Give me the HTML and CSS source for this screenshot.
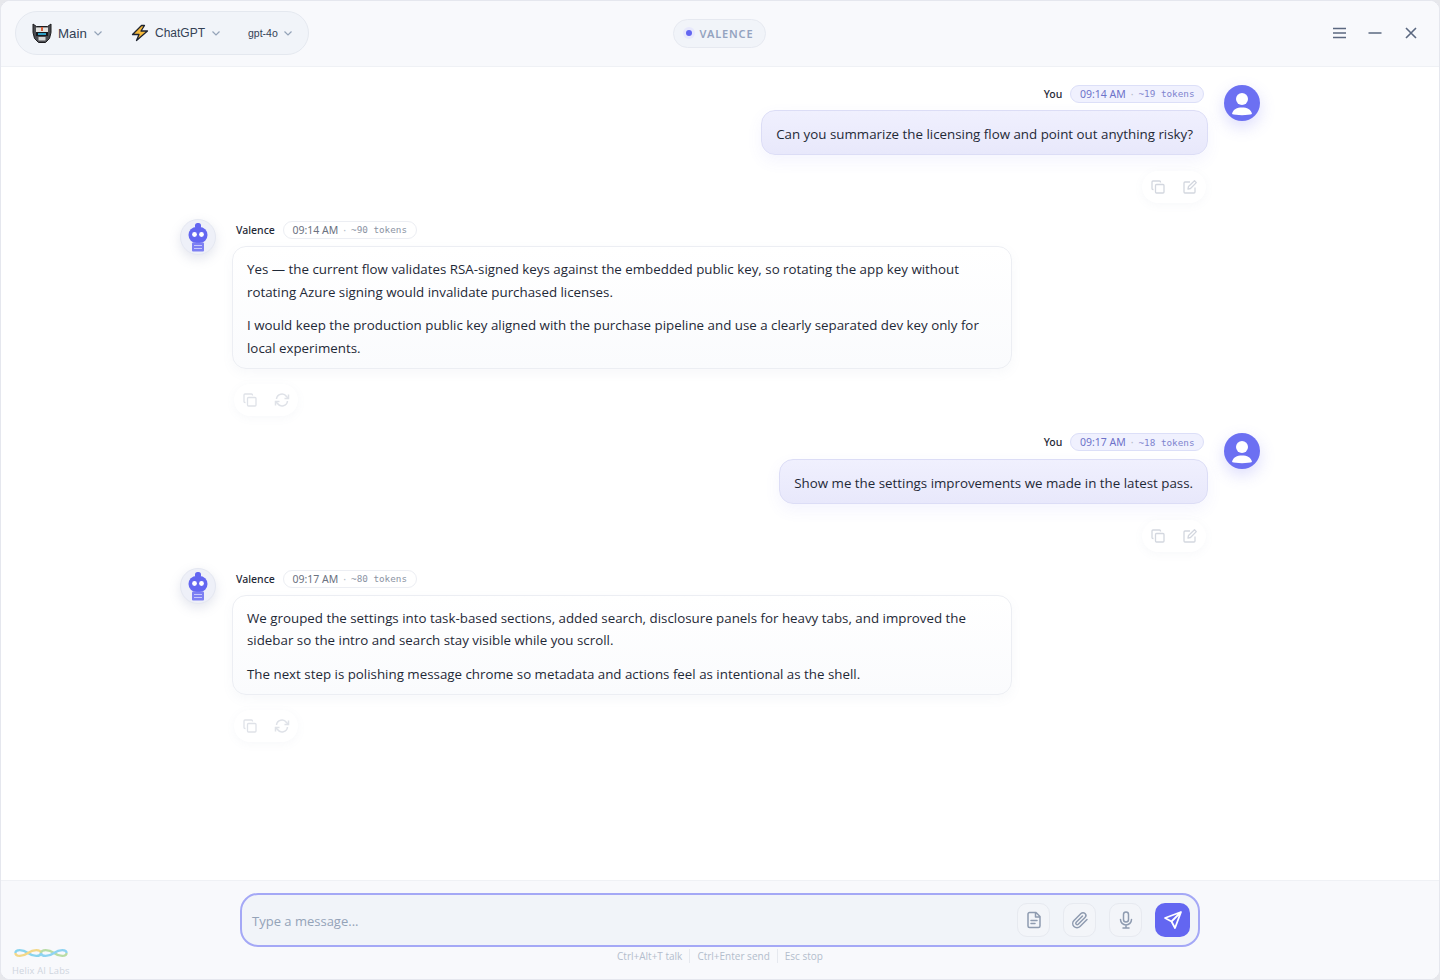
FILE: index.html
```html
<!DOCTYPE html>
<html lang="en">
<head>
    <meta charset="UTF-8">
    <title>Valence</title>
    <link rel="stylesheet" href="styles.css">
</head>
<body>
    <div class="window">
        <header class="topbar">
            <div class="selectors">
                <div class="selector sel-main">
                    <svg class="persona" width="20" height="20" viewBox="0 0 20 20">
                        <path d="M1 1L4.500 3.500H15.500L19 1V9.500L17.500 15.500L13.500 19.500H6.500L2.500 15.500L1 9.500Z" fill="#4a4b50" stroke="#1c1c1f" stroke-width="1"/>
                        <path d="M4 4.500H16V10H4Z" fill="#e4e3e0"/>
                        <path d="M9 4H11V8H9Z" fill="#d9603c"/>
                        <path d="M4 9H16V13H4Z" fill="#17191d"/>
                        <path d="M6 10H14V12H6Z" fill="#2f9fc4"/>
                        <path d="M6.500 14H13.500V17.500H6.500Z" fill="#d5d5d5"/>
                    </svg>
                    <span>Main</span>
                    <svg class="chev" width="10" height="10" viewBox="0 0 10 10"><path d="M1.500 3.500L5 7L8.500 3.500"/></svg>
                </div>
                <div class="selector sel-provider">
                    <svg width="18" height="18" viewBox="0 0 18 18">
                        <path d="M10.500 1.500L1.500 10.500H8L5.500 16.500L16.500 7H10L13.500 1.500Z" fill="#f6b93b" stroke="#1f2430" stroke-width="1.300" stroke-linejoin="round"/>
                    </svg>
                    <span>ChatGPT</span>
                    <svg class="chev" width="10" height="10" viewBox="0 0 10 10"><path d="M1.500 3.500L5 7L8.500 3.500"/></svg>
                </div>
                <div class="selector sel-model">
                    <span>gpt-4o</span>
                    <svg class="chev" width="10" height="10" viewBox="0 0 10 10"><path d="M1.500 3.500L5 7L8.500 3.500"/></svg>
                </div>
            </div>
            <div class="brand-pill"><i class="brand-dot"></i>VALENCE</div>
            <div class="win-controls">
                <svg width="16" height="16" viewBox="0 0 16 16"><path d="M2 3.500H15M2 8H15M2 12.500H15"/></svg>
                <svg width="16" height="16" viewBox="0 0 16 16"><path d="M1.500 8H14.500"/></svg>
                <svg width="16" height="16" viewBox="0 0 16 16"><path d="M3 3L13 13M13 3L3 13"/></svg>
            </div>
        </header>

        <main class="chat">
            <div class="msg msg-user">
                <div class="msg-body">
                    <div class="meta">
                        <span class="who">You</span>
                        <span class="stamp"><span>09:14 AM</span><i>·</i><code>~19 tokens</code></span>
                    </div>
                    <div class="bubble"><p>Can you summarize the licensing flow and point out anything risky?</p></div>
                    <div class="actions">
                        <svg width="16" height="16" viewBox="0 0 16 16"><use href="#i-copy"/></svg>
                        <svg width="16" height="16" viewBox="0 0 16 16"><use href="#i-edit"/></svg>
                    </div>
                </div>
                <div class="avatar avatar-user"><svg width="36" height="36" viewBox="0 0 36 36"><use href="#i-user"/></svg></div>
            </div>

            <div class="msg msg-bot">
                <div class="avatar avatar-bot"><svg width="36" height="36" viewBox="0 0 36 36"><use href="#i-bot"/></svg></div>
                <div class="msg-body">
                    <div class="meta">
                        <span class="who">Valence</span>
                        <span class="stamp"><span>09:14 AM</span><i>·</i><code>~90 tokens</code></span>
                    </div>
                    <div class="bubble">
                        <p>Yes — the current flow validates RSA-signed keys against the embedded public key, so rotating the app key without rotating Azure signing would invalidate purchased licenses.</p>
                        <p>I would keep the production public key aligned with the purchase pipeline and use a clearly separated dev key only for local experiments.</p>
                    </div>
                    <div class="actions">
                        <svg width="16" height="16" viewBox="0 0 16 16"><use href="#i-copy"/></svg>
                        <svg width="16" height="16" viewBox="0 0 16 16"><use href="#i-retry"/></svg>
                    </div>
                </div>
            </div>

            <div class="msg msg-user">
                <div class="msg-body">
                    <div class="meta">
                        <span class="who">You</span>
                        <span class="stamp"><span>09:17 AM</span><i>·</i><code>~18 tokens</code></span>
                    </div>
                    <div class="bubble"><p>Show me the settings improvements we made in the latest pass.</p></div>
                    <div class="actions">
                        <svg width="16" height="16" viewBox="0 0 16 16"><use href="#i-copy"/></svg>
                        <svg width="16" height="16" viewBox="0 0 16 16"><use href="#i-edit"/></svg>
                    </div>
                </div>
                <div class="avatar avatar-user"><svg width="36" height="36" viewBox="0 0 36 36"><use href="#i-user"/></svg></div>
            </div>

            <div class="msg msg-bot">
                <div class="avatar avatar-bot"><svg width="36" height="36" viewBox="0 0 36 36"><use href="#i-bot"/></svg></div>
                <div class="msg-body">
                    <div class="meta">
                        <span class="who">Valence</span>
                        <span class="stamp"><span>09:17 AM</span><i>·</i><code>~80 tokens</code></span>
                    </div>
                    <div class="bubble">
                        <p>We grouped the settings into task-based sections, added search, disclosure panels for heavy tabs, and improved the sidebar so the intro and search stay visible while you scroll.</p>
                        <p>The next step is polishing message chrome so metadata and actions feel as intentional as the shell.</p>
                    </div>
                    <div class="actions">
                        <svg width="16" height="16" viewBox="0 0 16 16"><use href="#i-copy"/></svg>
                        <svg width="16" height="16" viewBox="0 0 16 16"><use href="#i-retry"/></svg>
                    </div>
                </div>
            </div>
        </main>

        <footer class="composer">
            <div class="input-box">
                <span class="placeholder">Type a message...</span>
                <button class="tool"><svg width="20" height="20" viewBox="0 0 20 20"><path d="M5.500 2.500H12L16 6.500V16A1.500 1.500 0 0 1 14.500 17.500H5.500A1.500 1.500 0 0 1 4 16V4A1.500 1.500 0 0 1 5.500 2.500ZM11.500 2.500V7H16M7 10.500H13M7 13.500H11"/></svg></button>
                <button class="tool"><svg width="20" height="20" viewBox="0 0 20 20"><path d="M17 9.500L10 16.500A4.200 4.200 0 0 1 4 10.500L11 3.500A2.800 2.800 0 0 1 15 7.500L8.200 14.300A1.400 1.400 0 0 1 6.200 12.300L12.500 6"/></svg></button>
                <button class="tool"><svg width="20" height="20" viewBox="0 0 20 20"><path d="M10 2A2.500 2.500 0 0 1 12.500 4.500V9.500A2.500 2.500 0 0 1 7.500 9.500V4.500A2.500 2.500 0 0 1 10 2ZM4.500 9.500A5.500 5.500 0 0 0 15.500 9.500M10 15V18M7 18H13"/></svg></button>
                <button class="send"><svg width="20" height="20" viewBox="0 0 20 20"><path d="M18 2L2 8L8.500 11.500L12 18ZM18 2L8.500 11.500"/></svg></button>
            </div>
            <div class="hints">
                <span>Ctrl+Alt+T talk</span><span>Ctrl+Enter send</span><span>Esc stop</span>
            </div>
            <div class="lab">
                <svg width="54" height="14" viewBox="0 0 56 14">
                    <path d="M1.500 7C1.500 3 9 3 14.500 7S27.500 11 28 7" stroke="#8ad4ee"/>
                    <path d="M1.500 7C1.500 11 9 11 14.500 7S27.500 3 28 7" stroke="#f3d889"/>
                    <path d="M28 7C28.500 3 36 3 41.500 7S54.500 11 54.500 7" stroke="#b9dca6"/>
                    <path d="M28 7C28.500 11 36 11 41.500 7S54.500 3 54.500 7" stroke="#8fd3f2"/>
                </svg>
                <span>Helix AI Labs</span>
            </div>
        </footer>
    </div>

    <svg class="sprites" width="0" height="0">
        <symbol id="i-copy" viewBox="0 0 16 16">
            <path d="M6.500 5.500H13A1 1 0 0 1 14 6.500V13A1 1 0 0 1 13 14H6.500A1 1 0 0 1 5.500 13V6.500A1 1 0 0 1 6.500 5.500Z" fill="none" stroke="currentColor" stroke-width="1.300"/>
            <path d="M3.500 10.500H3A1 1 0 0 1 2 9.500V3A1 1 0 0 1 3 2H9.500A1 1 0 0 1 10.500 3V3.500" fill="none" stroke="currentColor" stroke-width="1.300"/>
        </symbol>
        <symbol id="i-edit" viewBox="0 0 16 16">
            <path d="M8 3H3A1 1 0 0 0 2 4V13A1 1 0 0 0 3 14H12A1 1 0 0 0 13 13V8.500" fill="none" stroke="currentColor" stroke-width="1.300"/>
            <path d="M12.500 1.800L14.300 3.600L8.500 9.500L6 10L6.500 7.500Z" fill="none" stroke="currentColor" stroke-width="1.300" stroke-linejoin="round"/>
        </symbol>
        <symbol id="i-retry" viewBox="0 0 16 16">
            <path d="M2.500 7A5.500 5.500 0 0 1 12.500 4.500L14 6M13.500 9A5.500 5.500 0 0 1 3.500 11.500L2 10" fill="none" stroke="currentColor" stroke-width="1.500"/>
            <path d="M14.500 2.500V6.500H10.500M1.500 13.500V9.500H5.500" fill="none" stroke="currentColor" stroke-width="1.500"/>
        </symbol>
        <symbol id="i-user" viewBox="0 0 36 36">
            <circle cx="18" cy="14" r="6" fill="#fff"/>
            <path d="M8 29C9 24 13 22.500 18 22.500S27 24 28 29C25 30.500 11 30.500 8 29Z" fill="#fff"/>
        </symbol>
        <symbol id="i-bot" viewBox="0 0 36 36">
            <rect x="15" y="4" width="6" height="6" rx="2.500" fill="#6366f1"/>
            <rect x="8.500" y="8" width="19" height="16" rx="8" fill="#6366f1"/>
            <circle cx="14.500" cy="15.500" r="2.400" fill="#fff"/>
            <circle cx="21.500" cy="15.500" r="2.400" fill="#fff"/>
            <rect x="12" y="23.500" width="12" height="9" rx="1" fill="#7c7ff3"/>
            <path d="M14 26.500H22M14 29.500H22" stroke="#c7c8fb" stroke-width="1"/>
        </symbol>
    </svg>
</body>
</html>
```

FILE: styles.css
```css
* {
    box-sizing: border-box;
}
html, body {
    margin: 0;
    height: 100%;
}
body {
    background: #e7e8ec;
    font-family: "Open Sans", "Noto Sans", sans-serif;
    color: #1f2937;
}
.sprites {
    position: absolute;
}
.window {
    height: 980px;
    display: flex;
    flex-direction: column;
    background: #fff;
    border: 1px solid #e5e7ee;
    border-radius: 10px;
    overflow: hidden;
}

/* top bar */
.topbar {
    height: 66px;
    flex: none;
    display: grid;
    grid-template-columns: 1fr auto 1fr;
    align-items: center;
    padding: 0 20px 1px 14px;
    background: #f8f9fc;
    border-bottom: 1px solid #eff1f5;
}
.selectors {
    justify-self: start;
    display: flex;
    align-items: center;
    width: 294px;
    height: 44px;
    padding: 0 16px;
    background: #f1f4f9;
    border: 1px solid #e4e8ef;
    border-radius: 22px;
}
.selector {
    display: flex;
    align-items: center;
    flex: none;
    font-family: "Liberation Sans", Arial, sans-serif;
    color: #334155;
    white-space: nowrap;
}
.sel-main {
    width: 99px;
    gap: 6px;
    font-size: 13.300px;
}
.sel-provider {
    width: 117px;
    gap: 6px;
    font-size: 12px;
}
.sel-model {
    gap: 5px;
    font-size: 10.500px;
}
.chev {
    fill: none;
    stroke: #94a3b8;
    stroke-width: 1.200;
}
.brand-pill {
    display: flex;
    align-items: center;
    gap: 5px;
    height: 29px;
    margin-left: 5px;
    padding: 0 12px 0 9px;
    background: #f1f4f9;
    border: 1px solid #e6e9f0;
    border-radius: 15px;
    font-family: "Noto Sans", sans-serif;
    font-size: 11px;
    font-weight: 600;
    letter-spacing: 0.850px;
    color: #94a3c0;
}
.brand-dot {
    width: 6px;
    height: 6px;
    margin: 0 3px;
    border-radius: 50%;
    background: #6366f1;
    box-shadow: 0 0 0 3px #e7e8fc;
}
.win-controls {
    justify-self: end;
    display: flex;
    align-items: center;
    gap: 20px;
}
.win-controls svg {
    fill: none;
    stroke: #5b6880;
    stroke-width: 1.600;
}

/* messages */
.chat {
    flex: 1;
    display: flex;
    flex-direction: column;
    gap: 16.800px;
    padding: 17.600px 179px 0;
    overflow: hidden;
}
.msg {
    display: flex;
    gap: 16px;
    align-items: flex-start;
}
.msg-user {
    justify-content: flex-end;
}
.msg-body {
    display: flex;
    flex-direction: column;
}
.msg-user .msg-body {
    align-items: flex-end;
}
.msg-bot .msg-body {
    width: 780px;
    align-items: flex-start;
}
.avatar {
    width: 36px;
    height: 36px;
    flex: none;
    border-radius: 50%;
}
.avatar-user {
    background: #6c70f2;
    box-shadow: 0 6px 16px rgba(99, 102, 241, 0.22);
}
.avatar-bot {
    background: #eef0f8;
    border: 1px solid #e4e7f1;
    box-shadow: 0 4px 12px rgba(120, 130, 170, 0.2);
}
.avatar-bot svg {
    margin: -1px;
}
.meta {
    display: flex;
    align-items: center;
    gap: 8px;
    height: 18px;
    margin: 0 4px 7.400px;
}
.msg-bot .meta {
    margin-top: 1.600px;
}
.who {
    font-family: "Noto Sans", sans-serif;
    font-size: 10.500px;
    font-weight: 500;
    color: #1f2937;
}
.stamp {
    display: flex;
    align-items: center;
    gap: 5px;
    height: 18px;
    padding: 0 8.500px;
    border: 1px solid #eceef3;
    border-radius: 9px;
    background: #fff;
    font-family: "Noto Sans", sans-serif;
    font-size: 10.500px;
    color: #6b7280;
}
.stamp i {
    font-style: normal;
    color: #b6bcc8;
}
.stamp code {
    font-family: "DejaVu Sans Mono", monospace;
    font-size: 9.300px;
    color: #8b93a3;
}
.msg-user .stamp {
    background: #f0f1fe;
    border-color: #dcdff8;
    color: #6d72c9;
}
.msg-user .stamp code {
    color: #7f84cf;
}
.bubble {
    border-radius: 14px;
    font-size: 13.330px;
    line-height: 22.400px;
    color: #1f2937;
}
.bubble p {
    margin: 0;
}
.bubble p + p {
    margin-top: 11.200px;
}
.msg-user .bubble {
    padding: 12px 14px 9px;
    background: linear-gradient(180deg, #f0f0fe, #e8e8fb);
    border: 1px solid #dcddf6;
    box-shadow: 0 6px 16px rgba(99, 102, 241, 0.07);
}
.msg-bot .bubble {
    width: 780px;
    padding: 11px 14px 8.600px;
    background: linear-gradient(180deg, #fff, #fafbfd);
    border: 1px solid #eceef3;
    box-shadow: 0 4px 12px rgba(120, 130, 170, 0.06);
}
.actions {
    display: flex;
    align-items: center;
    gap: 16px;
    height: 32px;
    margin: 16px 2px -1px;
    padding: 0 8px;
    background: #fff;
    border-radius: 16px;
    box-shadow: 0 2px 10px rgba(120, 130, 170, 0.06);
    color: #d3d7df;
}
.msg-bot .actions {
    margin: 15px 2px 1px;
    color: #dfe2e8;
}

/* composer */
.composer {
    height: 99px;
    flex: none;
    display: flex;
    flex-direction: column;
    align-items: center;
    padding-top: 12px;
    background: #f8f9fc;
    border-top: 1px solid #eff1f5;
    position: relative;
}
.input-box {
    width: 960px;
    height: 54px;
    display: flex;
    align-items: center;
    gap: 13px;
    padding: 0 8px 0 10px;
    background: #f1f4f9;
    border: 2px solid #a4a8f6;
    border-radius: 18px;
}
.placeholder {
    flex: 1;
    padding-top: 2px;
    font-size: 13px;
    color: #94a3b8;
}
.tool, .send {
    height: 34px;
    display: flex;
    align-items: center;
    justify-content: center;
    padding: 0;
    border-radius: 10px;
}
.tool {
    width: 33px;
    background: #f3f5f9;
    border: 1px solid #e7eaf0;
}
.tool svg {
    fill: none;
    stroke: #8e9bb0;
    stroke-width: 1.500;
    stroke-linejoin: round;
    stroke-linecap: round;
}
.send {
    width: 35px;
    background: #6366f1;
    border: none;
}
.send svg {
    fill: none;
    stroke: #fff;
    stroke-width: 1.800;
    stroke-linejoin: round;
}
.hints {
    display: flex;
    margin-top: 2px;
    font-size: 10px;
    line-height: 14px;
    color: #b3bdcc;
}
.hints span + span {
    margin-left: 7px;
    padding-left: 7px;
    border-left: 1px solid #e6e9ef;
}
.lab {
    position: absolute;
    left: 11px;
    bottom: 2px;
    display: flex;
    flex-direction: column;
    gap: 4px;
    font-size: 9.300px;
    letter-spacing: 0.200px;
    color: #cfd5de;
}
.lab svg {
    margin-left: 2px;
    fill: none;
    stroke-width: 2.400;
}
```
